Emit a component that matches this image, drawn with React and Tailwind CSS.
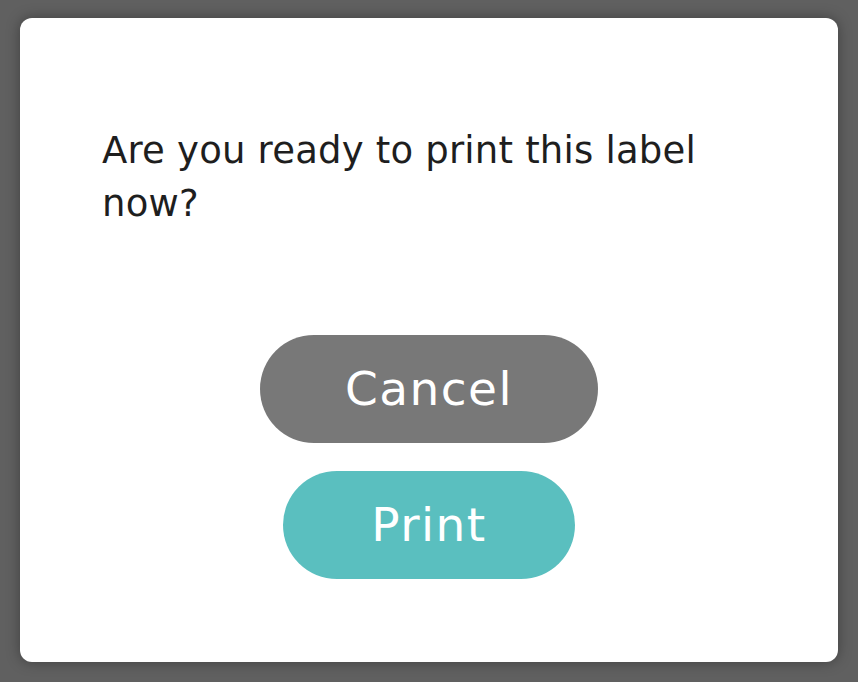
export default function App() {
    return (
        <div className="w-[858px] h-[682px] bg-[#606060] pt-[18px] pl-[20px]" style={{ fontFamily: '"DejaVu Sans", "Open Sans", sans-serif' }}>
            <div className="w-[818px] h-[644px] bg-white rounded-[12px] shadow-[0_0_14px_rgba(0,0,0,0.35)] flex flex-col">
                <div className="pl-[82px] pr-[110px] pt-[106px]">
                    <p className="text-[37px] leading-[53px] tracking-[0.2px] text-[#1e1e1e]">
                        Are you ready to print this label now?
                    </p>
                </div>
                <div className="flex flex-col items-center gap-[28px] mt-[105px]">
                    <button className="w-[338px] h-[108px] rounded-full bg-[#787878] text-white text-[47px] tracking-[1.5px]">
                        Cancel
                    </button>
                    <button className="w-[292px] h-[108px] rounded-full bg-[#5abfbf] text-white text-[47px] tracking-[1.5px]">
                        Print
                    </button>
                </div>
            </div>
        </div>
    );
}
